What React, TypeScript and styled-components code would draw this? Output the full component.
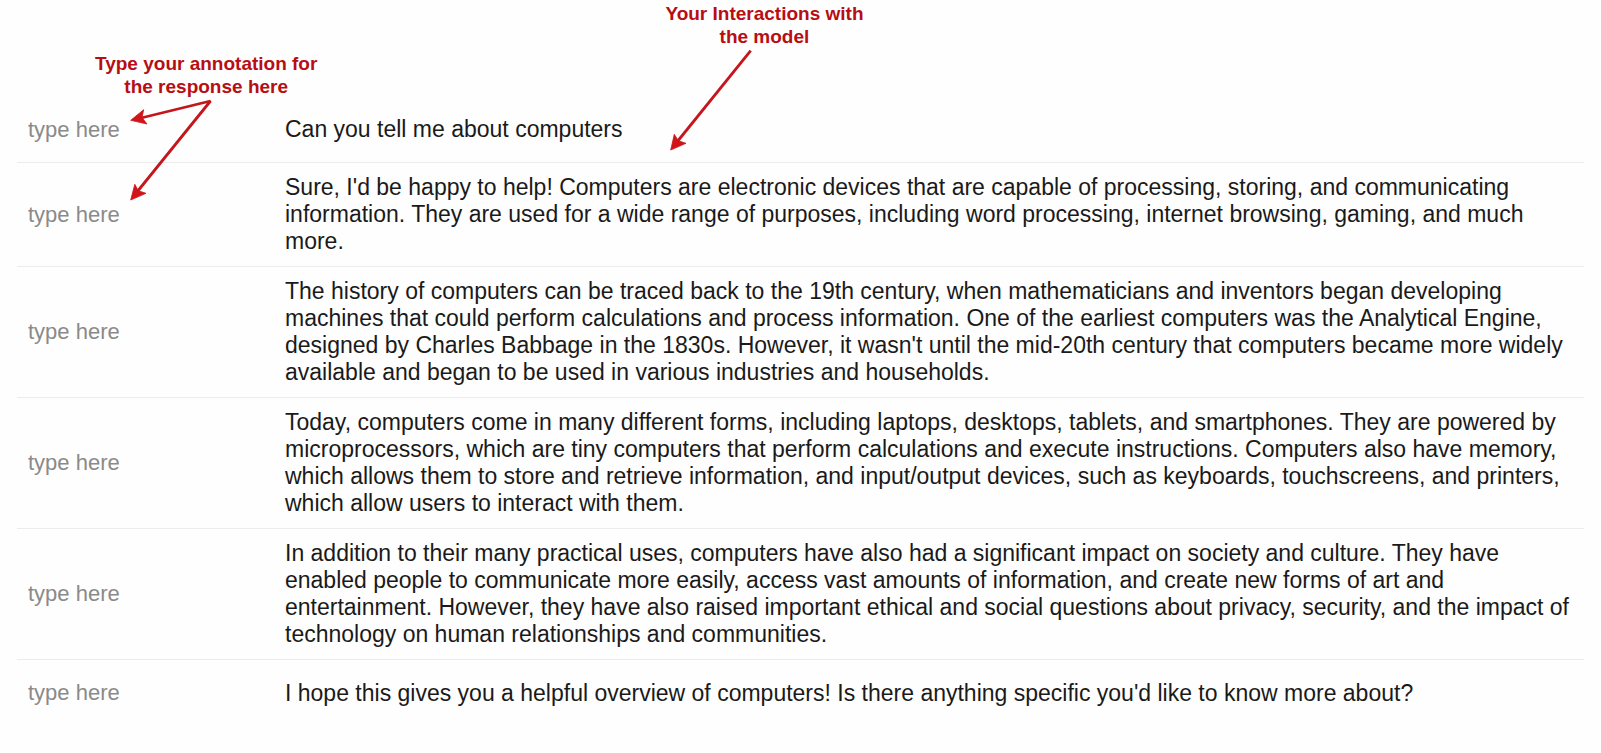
import React from "react";
import styled, { createGlobalStyle } from "styled-components";

const GlobalStyle = createGlobalStyle`
  body {
    margin: 0;
    background: #fefefe;
    color: #1a1a1a;
    font-family: "Liberation Sans", Arial, sans-serif;
  }
`;

const Page = styled.main`
  padding: 0 17px 24px;
`;

const Callouts = styled.header`
  display: flex;
  align-items: flex-start;
  gap: 348px;
  height: 97px;
  padding-left: 78px;
  box-sizing: border-box;
`;

const Callout = styled.div<{ $top: number }>`
  position: relative;
  margin-top: ${({ $top }) => $top}px;
`;

const CalloutText = styled.p`
  margin: 0;
  color: #b80d12;
  font-size: 19px;
  font-weight: bold;
  line-height: 23px;
  text-align: center;
  white-space: nowrap;
`;

const ArrowDrawing = styled.svg<{ $left: number }>`
  position: absolute;
  top: 46px;
  left: ${({ $left }) => $left}px;
  pointer-events: none;
`;

const Transcript = styled.table`
  width: 100%;
  border-collapse: separate;
  border-spacing: 0;
  table-layout: fixed;
`;

const Row = styled.tr`
  &:not(:last-child) > td {
    border-bottom: 1px solid #ececec;
  }
`;

const NoteCell = styled.td`
  width: 257px;
  height: 66px;
  padding: 0 11px;
  box-sizing: border-box;
  vertical-align: middle;
`;

const NoteInput = styled.input`
  display: block;
  width: 100%;
  height: 44px;
  padding: 0;
  border: 0;
  outline: none;
  background: transparent;
  color: #1a1a1a;
  font: 22px/27px "Liberation Sans", Arial, sans-serif;

  &::placeholder {
    color: #8a8a8a;
    opacity: 1;
  }
`;

const MessageCell = styled.td`
  padding: 11px 0 11px 11px;
  font-size: 23px;
  line-height: 27px;
  vertical-align: middle;
  white-space: pre-line;
`;

const messages = [
  `Can you tell me about computers`,
  `Sure, I'd be happy to help! Computers are electronic devices that are capable of processing, storing, and communicating
information. They are used for a wide range of purposes, including word processing, internet browsing, gaming, and much
more.`,
  `The history of computers can be traced back to the 19th century, when mathematicians and inventors began developing
machines that could perform calculations and process information. One of the earliest computers was the Analytical Engine,
designed by Charles Babbage in the 1830s. However, it wasn't until the mid-20th century that computers became more widely
available and began to be used in various industries and households.`,
  `Today, computers come in many different forms, including laptops, desktops, tablets, and smartphones. They are powered by
microprocessors, which are tiny computers that perform calculations and execute instructions. Computers also have memory,
which allows them to store and retrieve information, and input/output devices, such as keyboards, touchscreens, and printers,
which allow users to interact with them.`,
  `In addition to their many practical uses, computers have also had a significant impact on society and culture. They have
enabled people to communicate more easily, access vast amounts of information, and create new forms of art and
entertainment. However, they have also raised important ethical and social questions about privacy, security, and the impact of
technology on human relationships and communities.`,
  `I hope this gives you a helpful overview of computers! Is there anything specific you'd like to know more about?`,
];

export default function App() {
  return (
    <>
      <GlobalStyle />
      <Page>
        <Callouts>
          <Callout $top={52}>
            <CalloutText>
              Type your annotation for
              <br />
              the response here
            </CalloutText>
            <ArrowDrawing $left={33} width="86" height="106" viewBox="128 98 86 106" aria-hidden="true">
              <path d="M141 118 L210.5 101 L137 192" fill="none" stroke="#c4161c" strokeWidth="2.8" strokeLinejoin="bevel" />
              <path d="M130.7 120.3 L143.7 109.7 L142 117.6 L147 124 Z" fill="#d0141a" stroke="#d0141a" strokeWidth="0.8" />
              <path d="M130.7 200 L134.8 184.3 L138.3 190.7 L146 193.3 Z" fill="#d0141a" stroke="#d0141a" strokeWidth="0.8" />
            </ArrowDrawing>
          </Callout>
          <Callout $top={2}>
            <CalloutText>
              Your Interactions with
              <br />
              the model
            </CalloutText>
            <ArrowDrawing $left={3} width="86" height="106" viewBox="668 48 86 106" aria-hidden="true">
              <path d="M750.7 50.7 L677 142" fill="none" stroke="#c4161c" strokeWidth="2.8" />
              <path d="M670.7 150 L674.3 134.3 L678.3 140.7 L686 143.3 Z" fill="#d0141a" stroke="#d0141a" strokeWidth="0.8" />
            </ArrowDrawing>
          </Callout>
        </Callouts>
        <Transcript>
          <tbody>
            {messages.map((message, index) => (
              <Row key={index}>
                <NoteCell>
                  <NoteInput
                    type="text"
                    placeholder="type here"
                    aria-label={`Annotation for message ${index + 1}`}
                  />
                </NoteCell>
                <MessageCell>{message}</MessageCell>
              </Row>
            ))}
          </tbody>
        </Transcript>
      </Page>
    </>
  );
}
